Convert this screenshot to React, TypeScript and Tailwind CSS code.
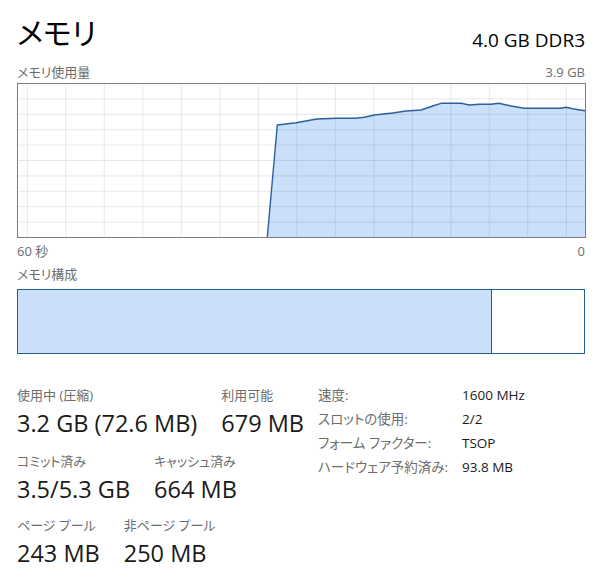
import React from "react";

// memory usage samples, plotted in chart coordinates (569 x 155)
const usagePoints: [number, number][] = [
  [250.3, 154], [260.3, 42], [279.3, 39.7], [299.7, 36], [319, 35.3], [339, 35.3],
  [347.3, 34.3], [357.3, 32], [375.7, 30], [389, 28], [404, 27], [415.7, 23],
  [424, 20.3], [444, 20.3], [452.3, 22], [462.3, 21.3], [474, 21.3], [481.7, 20.3],
  [494, 23], [507.3, 25.3], [522.3, 25.3], [544, 25.3], [549, 24.3], [555.7, 25.7],
  [568, 27.7],
];

const W = 569;
const H = 155;

function UsageChart() {
  const line = usagePoints.map(([x, y]) => `${x},${y}`).join(" ");
  const area = `${line} 568,154`;
  const cols = Array.from({ length: 15 }, (_, i) => 10.3 + i * 38.5);
  const rows = Array.from({ length: 9 }, (_, i) => 0.5 + (i + 1) * 15.4);

  return (
    <svg width={W} height={H} viewBox={`0 0 ${W} ${H}`} className="block">
      <rect x={0} y={0} width={W} height={H} fill="#ffffff" />
      <polygon points={area} fill="#c9dffa" />
      {cols.map((x) => (
        <line key={`c${x}`} x1={x} y1={0} x2={x} y2={H} stroke="#000" strokeOpacity={0.09} strokeWidth={1} />
      ))}
      {rows.map((y) => (
        <line key={`r${y}`} x1={0} y1={y} x2={W} y2={y} stroke="#000" strokeOpacity={0.09} strokeWidth={1} />
      ))}
      <polyline points={line} fill="none" stroke="#2b5f9e" strokeWidth={1.4} strokeLinejoin="round" />
      <rect x={0.5} y={0.5} width={W - 1} height={H - 1} fill="none" stroke="#7d7d7d" strokeWidth={1} />
    </svg>
  );
}

type Stat = { label: string; value: string };

function StatRow({ items, className }: { items: Stat[]; className?: string }) {
  return (
    <div className={`flex gap-[24px] ${className ?? ""}`}>
      {items.map((item) => (
        <div key={item.label} className="flex flex-col">
          <span className="text-[13px] leading-none text-[#6d6d6d]">{item.label}</span>
          <span className="mt-[10px] text-[23.5px] leading-none text-[#1a1a1a]">{item.value}</span>
        </div>
      ))}
    </div>
  );
}

const details: Stat[] = [
  { label: "速度:", value: "1600 MHz" },
  { label: "スロットの使用:", value: "2/2" },
  { label: "フォーム ファクター:", value: "TSOP" },
  { label: "ハードウェア予約済み:", value: "93.8 MB" },
];

export default function App() {
  return (
    <div
      className="h-[586px] w-[612px] bg-white pl-[17px] pr-[27px] text-[#1a1a1a] [font-family:'Open_Sans','Noto_Sans_CJK_JP',sans-serif] [font-feature-settings:'palt']"
    >
      {/* header */}
      <div className="flex items-end justify-between pt-[18px]">
        <h1 className="text-[30px] font-normal leading-none text-black">メモリ</h1>
        <span className="mb-[-2px] text-[19px] leading-none text-black">4.0 GB DDR3</span>
      </div>

      <div className="mt-[18px] flex justify-between text-[13px] leading-none text-[#6d6d6d]">
        <span>メモリ使用量</span>
        <span>3.9 GB</span>
      </div>

      <div className="mt-[4px]">
        <UsageChart />
      </div>

      <div className="mt-[7px] flex justify-between text-[13px] leading-none text-[#6d6d6d]">
        <span>60 秒</span>
        <span>0</span>
      </div>

      <div className="mt-[10px] text-[13px] leading-none text-[#6d6d6d]">メモリ構成</div>

      {/* composition bar */}
      <div className="mt-[8px] flex h-[65px] border border-[#1f5f93]">
        <div className="w-[83.8%] border-r border-[#1f5f93] bg-[#c9dffa]" />
        <div className="flex-1 bg-white" />
      </div>

      {/* stats */}
      <div className="mt-[35px] flex items-start">
        <div className="w-[301px]">
          <StatRow items={[{ label: "使用中 (圧縮)", value: "3.2 GB (72.6 MB)" }, { label: "利用可能", value: "679 MB" }]} />
          <StatRow className="mt-[19px]" items={[{ label: "コミット済み", value: "3.5/5.3 GB" }, { label: "キャッシュ済み", value: "664 MB" }]} />
          <StatRow className="mt-[18px]" items={[{ label: "ページ プール", value: "243 MB" }, { label: "非ページ プール", value: "250 MB" }]} />
        </div>
        <div className="-mt-[1px] grid grid-cols-[144px_1fr] gap-y-[10px] text-[13.5px] leading-[14px]">
          {details.map((d) => (
            <React.Fragment key={d.label}>
              <span className="text-[#6d6d6d]">{d.label}</span>
              <span className="text-[#1a1a1a]">{d.value}</span>
            </React.Fragment>
          ))}
        </div>
      </div>
    </div>
  );
}
